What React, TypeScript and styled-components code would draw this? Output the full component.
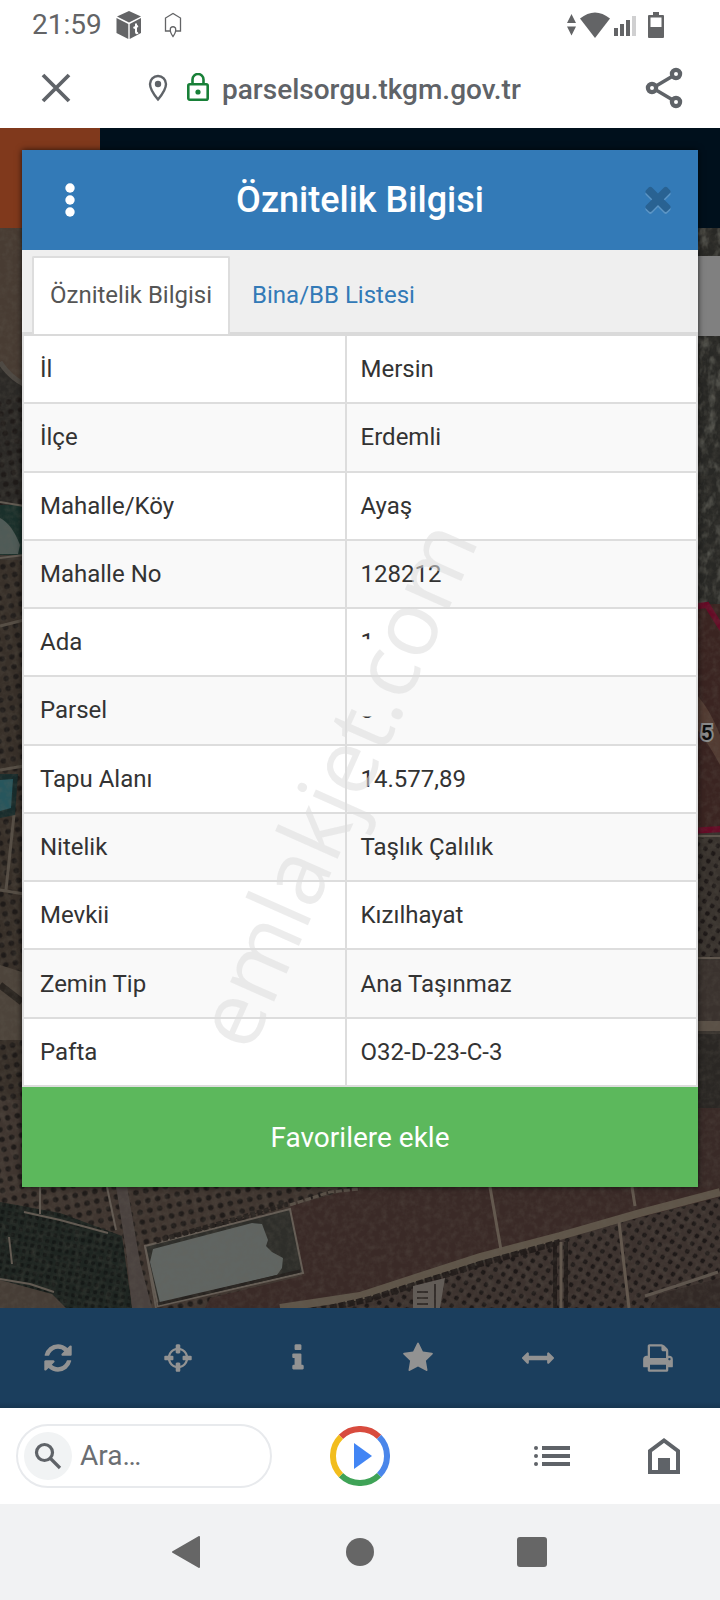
import React from "react";
import styled, { createGlobalStyle } from "styled-components";

const GlobalStyle = createGlobalStyle`
  * { box-sizing: border-box; }
  body { margin: 0; background: #ffffff; font-family: Roboto, "Liberation Sans", sans-serif; }
  button, input { font-family: inherit; }
`;

const Screen = styled.div`
  min-height: 100vh;
  display: flex;
  flex-direction: column;
`;

const StatusBar = styled.header`
  height: 50px;
  padding: 0 56px 0 32px;
  display: flex;
  align-items: center;
  justify-content: space-between;
  color: #636466;
`;

const StatusGroup = styled.div<{ $gap: number }>`
  display: flex;
  align-items: center;
  gap: ${(p) => p.$gap}px;
`;

const Clock = styled.span`
  font-size: 28px;
  line-height: 32px;
`;

const IconButton = styled.button`
  border: 0;
  padding: 0;
  background: transparent;
  color: inherit;
  display: flex;
  align-items: center;
  justify-content: center;
`;

const BrowserBar = styled.div`
  height: 78px;
  padding: 0 36px 2px 40px;
  display: flex;
  align-items: center;
  color: #5f6368;
`;

const Address = styled.div`
  flex: 1;
  min-width: 0;
  padding-left: 76px;
  display: flex;
  align-items: center;
`;

const LockBox = styled.span`
  display: flex;
  margin: 0 12px 0 18px;
`;

const Url = styled.span`
  font-size: 28px;
  font-weight: 500;
  line-height: 36px;
  padding-top: 4px;
`;

const Viewport = styled.main`
  flex: 1;
  display: grid;
  grid-template-columns: minmax(0, 1fr);
`;

const PageLayer = styled.div`
  grid-area: 1 / 1;
  display: flex;
  flex-direction: column;
`;

const SiteHeader = styled.div`
  height: 100px;
  display: flex;
  background: #00101c;
`;

const SiteLogo = styled.div`
  width: 100px;
  background: #80391c;
`;

const MapArea = styled.div`
  position: relative;
  flex: 1;
  overflow: hidden;
  background: #39342f;
`;

const MapDrawing = styled.svg`
  position: absolute;
  inset: 0;
  width: 100%;
  height: 100%;
`;

const MapPanel = styled.div`
  position: relative;
  width: 40px;
  height: 80px;
  margin: 28px 0 0 auto;
  background: #808080;
`;

const Toolbar = styled.nav`
  height: 100px;
  display: flex;
  color: #929292;
  background: linear-gradient(#1b3e5d 94%, #173650);
`;

const ToolButton = styled(IconButton)`
  flex: 1;
  padding-right: 4px;
`;

const Dialog = styled.section`
  grid-area: 1 / 1;
  position: relative;
  align-self: start;
  margin: 22px;
  box-shadow: 0 0 6px rgba(0, 0, 0, 0.7);
`;

const DialogHeader = styled.div`
  height: 100px;
  display: grid;
  grid-template-columns: 96px 1fr 96px;
  background: #337ab7;
  color: #ffffff;
`;

const DialogTitle = styled.h1`
  margin: 0;
  text-align: center;
  font-size: 36px;
  font-weight: 500;
  line-height: 100px;
  white-space: nowrap;
`;

const CloseButton = styled(IconButton)`
  padding: 0 0 4px 16px;
  color: #296292;
  svg { filter: drop-shadow(0 2px 0 #5c95c5); }
`;

const Tabs = styled.div`
  display: flex;
  gap: 4px;
  padding: 6px 10px 0;
  background: #efefef;
  border-bottom: 4px solid #dadada;
`;

const Tab = styled.button<{ $active?: boolean }>`
  height: 78px;
  margin-bottom: -2px;
  padding: 0 16px 2px;
  font-size: 24px;
  line-height: 32px;
  border: 2px solid ${(p) => (p.$active ? "#dddddd" : "transparent")};
  border-bottom: 0;
  border-radius: 2px 2px 0 0;
  background: ${(p) => (p.$active ? "#ffffff" : "transparent")};
  color: ${(p) => (p.$active ? "#555555" : "#337ab7")};
`;

const DataTable = styled.table`
  width: 100%;
  height: 751px;
  table-layout: fixed;
  border: 2px solid #dddddd;
  border-top: 0;
  border-bottom: 0;
  border-collapse: separate;
  border-spacing: 0;
  background: #ffffff;
  color: #333333;
  font-size: 24px;
  line-height: 32px;
`;

const Row = styled.tr`
  &:nth-child(even) { background: #f9f9f9; }
`;

const NameCell = styled.th`
  width: 48%;
  height: 68px;
  padding: 0 16px;
  border-right: 2px solid #dddddd;
  border-bottom: 2px solid #dddddd;
  text-align: left;
  font-weight: 400;
`;

const ValueCell = styled.td`
  padding: 0 14px;
  border-bottom: 2px solid #dddddd;
`;

const Masked = styled.span<{ $clip: string }>`
  display: inline-block;
  clip-path: inset(${(p) => p.$clip});
`;

const FavouriteButton = styled.button`
  display: block;
  width: 100%;
  height: 100px;
  border: 0;
  background: #5cb85c;
  color: #ffffff;
  font-size: 28px;
`;

const Watermark = styled.div`
  position: absolute;
  left: 46%;
  top: 61%;
  transform: translate(-50%, -50%) rotate(-66deg);
  font-family: "Open Sans", sans-serif;
  font-size: 90px;
  line-height: 92px;
  color: rgba(220, 220, 220, 0.55);
  pointer-events: none;
`;

const BottomBar = styled.footer`
  height: 96px;
  padding: 0 16px;
  display: grid;
  grid-template-columns: 1fr auto 1fr;
  align-items: center;
  color: #5f6368;
  background: #ffffff;
`;

const BottomActions = styled.div`
  display: flex;
  align-items: center;
  justify-content: flex-end;
  gap: 78px;
  padding-right: 24px;
`;

const SearchBox = styled.label`
  width: 256px;
  height: 64px;
  padding: 0 6px;
  display: flex;
  align-items: center;
  gap: 8px;
  border: 2px solid #e8eaed;
  border-radius: 32px;
`;

const SearchCircle = styled.span`
  flex: none;
  width: 48px;
  height: 48px;
  border-radius: 50%;
  display: flex;
  align-items: center;
  justify-content: center;
  background: #f1f3f4;
`;

const SearchInput = styled.input`
  min-width: 0;
  flex: 1;
  border: 0;
  padding: 0;
  outline: 0;
  background: transparent;
  font-size: 28px;
  line-height: 36px;
  &::placeholder { color: #6b6e72; opacity: 1; }
`;

const SystemNav = styled.nav`
  height: 96px;
  display: flex;
  align-items: center;
  justify-content: center;
  gap: 124px;
  color: #666666;
  background: #f1f2f3;
`;

const NavButton = styled(IconButton)`
  width: 48px;
  height: 48px;
`;

const toolIcons = [
  {
    label: "Yenile",
    path: "M1639 1056q0 5-1 7-64 268-268 434.5t-478 166.5q-146 0-282.5-55t-243.5-157l-129 129q-19 19-45 19t-45-19-19-45v-448q0-26 19-45t45-19h448q26 0 45 19t19 45-19 45l-137 137q71 66 161 102t187 36q134 0 250-65t186-179q11-17 53-117 8-23 30-23h192q13 0 22.5 9.5t9.5 22.5zm25-800v448q0 26-19 45t-45 19h-448q-26 0-45-19t-19-45 19-45l138-138q-148-137-349-137-134 0-250 65t-186 179q-11 17-53 117-8 23-30 23h-199q-13 0-22.5-9.5t-9.5-22.5v-7q65-268 270-434.5t480-166.5q146 0 284 55.5t245 156.5l130-129q19-19 45-19t45 19 19 45z",
  },
  {
    label: "Konum",
    path: "M1325 1024h-109q-26 0-45-19t-19-45v-128q0-26 19-45t45-19h109q-32-108-112.5-188.5t-188.5-112.5v109q0 26-19 45t-45 19h-128q-26 0-45-19t-19-45v-109q-108 32-188.5 112.5t-112.5 188.5h109q26 0 45 19t19 45v128q0 26-19 45t-45 19h-109q32 108 112.5 188.5t188.5 112.5v-109q0-26 19-45t45-19h128q26 0 45 19t19 45v109q108-32 188.5-112.5t112.5-188.5zm339-192v128q0 26-19 45t-45 19h-143q-37 161-154.5 278.5t-278.5 154.5v143q0 26-19 45t-45 19h-128q-26 0-45-19t-19-45v-143q-161-37-278.5-154.5t-154.5-278.5h-143q-26 0-45-19t-19-45v-128q0-26 19-45t45-19h143q37-161 154.5-278.5t278.5-154.5v-143q0-26 19-45t45-19h128q26 0 45 19t19 45v143q161 37 278.5 154.5t154.5 278.5h143q26 0 45 19t19 45z",
  },
  {
    label: "Bilgi",
    path: "M1216 1344v128q0 26-19 45t-45 19h-512q-26 0-45-19t-19-45v-128q0-26 19-45t45-19h64v-384h-64q-26 0-45-19t-19-45v-128q0-26 19-45t45-19h384q26 0 45 19t19 45v576h64q26 0 45 19t19 45zm-128-1152v192q0 26-19 45t-45 19h-256q-26 0-45-19t-19-45v-192q0-26 19-45t45-19h256q26 0 45 19t19 45z",
  },
  {
    label: "Favoriler",
    path: "M1728 647q0 22-26 48l-363 354 86 500q1 7 1 20 0 21-10.5 35.5t-30.5 14.5q-19 0-40-12l-449-236-449 236q-22 12-40 12-21 0-31.5-14.5t-10.5-35.5q0-6 2-20l86-500-364-354q-25-27-25-48 0-37 56-46l502-73 225-455q19-41 49-41t49 41l225 455 502 73q56 9 56 46z",
  },
  {
    label: "Ölçüm",
    path: "M1792 896q0 26-19 45l-256 256q-19 19-45 19t-45-19-19-45v-128h-1024v128q0 26-19 45t-45 19-45-19l-256-256q-19-19-19-45t19-45l256-256q19-19 45-19t45 19 19 45v128h1024v-128q0-26 19-45t45-19 45 19l256 256q19 19 19 45z",
  },
  {
    label: "Yazdır",
    path: "M448 1536h896v-256h-896v256zm0-640h896v-384h-160q-40 0-68-28t-28-68v-160h-640v640zm1152 64q0-26-19-45t-45-19-45 19-19 45 19 45 45 19 45-19 19-45zm128 0v416q0 13-9.5 22.5t-22.5 9.5h-224v160q0 40-28 68t-68 28h-960q-40 0-68-28t-28-68v-160h-224q-13 0-22.5-9.5t-9.5-22.5v-416q0-79 56.5-135.5t135.5-56.5h64v-544q0-40 28-68t68-28h672q40 0 88 20t76 48l152 152q28 28 48 76t20 88v256h64q79 0 135.5 56.5t56.5 135.5z",
  },
];

const closePath =
  "M1490 1322q0 40-28 68l-136 136q-28 28-68 28t-68-28l-294-294-294 294q-28 28-68 28t-68-28l-136-136q-28-28-28-68t28-68l294-294-294-294q-28-28-28-68t28-68l136-136q28-28 68-28t68 28l294 294 294-294q28-28 68-28t68 28l136 136q28 28 28 68t-28 68l-294 294 294 294q28 28 28 68z";

const rows: { name: string; value: string; clip?: string }[] = [
  { name: "İl", value: "Mersin" },
  { name: "İlçe", value: "Erdemli" },
  { name: "Mahalle/Köy", value: "Ayaş" },
  { name: "Mahalle No", value: "128212" },
  { name: "Ada", value: "1", clip: "0 0 19px 0" },
  { name: "Parsel", value: "3", clip: "22px 0 0 0" },
  { name: "Tapu Alanı", value: "14.577,89" },
  { name: "Nitelik", value: "Taşlık Çalılık" },
  { name: "Mevkii", value: "Kızılhayat" },
  { name: "Zemin Tip", value: "Ana Taşınmaz" },
  { name: "Pafta", value: "O32-D-23-C-3" },
];

function SatelliteMap() {
  return (
    <MapDrawing viewBox="0 228 720 1080" preserveAspectRatio="xMidYMid slice" aria-hidden="true">
      <defs>
        <pattern id="trees" width="10" height="10" patternUnits="userSpaceOnUse" patternTransform="rotate(-12)">
          <circle cx="5" cy="5" r="2.8" fill="#1f1b19" />
        </pattern>
        <pattern id="rowsOfTrees" width="9" height="9" patternUnits="userSpaceOnUse" patternTransform="rotate(32)">
          <circle cx="4" cy="4" r="2.4" fill="#1d1817" />
        </pattern>
        <pattern id="grove" width="7" height="7" patternUnits="userSpaceOnUse" patternTransform="rotate(10)">
          <circle cx="3" cy="3" r="2.2" fill="#141816" />
        </pattern>
        <filter id="grain" x="0" y="0" width="100%" height="100%" colorInterpolationFilters="sRGB">
          <feTurbulence type="fractalNoise" baseFrequency="0.16" numOctaves="3" seed="4" />
          <feColorMatrix values="0 0 0 0 0.40  0 0 0 0 0.38  0 0 0 0 0.34  1.6 0 0 0 -0.6" />
        </filter>
        <filter id="scrub" x="0" y="0" width="100%" height="100%" colorInterpolationFilters="sRGB">
          <feTurbulence type="fractalNoise" baseFrequency="0.12 0.08" numOctaves="3" seed="9" />
          <feColorMatrix values="0 0 0 0 0.42  0 0 0 0 0.42  0 0 0 0 0.39  3 0 0 0 -1.4" />
        </filter>
      </defs>

      {/* western edge */}
      <rect y="228" width="40" height="250" fill="#483c33" />
      <path d="M0 364Q14 382 40 388V520H0Z" fill="#2b2926" />
      <path d="M0 362Q14 384 40 390" fill="none" stroke="#4e4943" strokeWidth="5" />
      <rect y="395" width="40" height="110" fill="url(#trees)" />
      <path d="M0 505H22V555H0Z" fill="#1a302b" />
      <path d="M0 518Q12 524 20 545L18 554H0Z" fill="#4f5b57" />
      <path d="M0 502L24 506M0 558L24 555" stroke="#625b53" strokeWidth="2" />
      <rect y="560" width="40" height="660" fill="#383029" />
      <rect y="560" width="40" height="660" fill="url(#trees)" />
      <path d="M0 626L24 620M0 770L24 766M0 890L24 894M14 815L6 890" stroke="#564e45" strokeWidth="3" />
      <path d="M0 774H18L15 815 0 818Z" fill="#182c2c" />
      <path d="M0 780L13 779 11 808 0 811Z" fill="#27565d" />
      <path d="M0 965L22 972V1040H0Z" fill="#4d443b" />
      <path d="M0 985L22 1002" stroke="#2a2520" strokeWidth="7" />

      {/* eastern edge */}
      <rect x="690" y="228" width="30" height="380" fill="#282825" />
      <rect x="690" y="228" width="30" height="380" filter="url(#scrub)" opacity="0.6" />
      <rect x="690" y="604" width="30" height="228" fill="#3a2421" />
      <path d="M690 690Q706 700 720 735V765Q704 735 690 722Z" fill="#523b32" />
      <path d="M690 607L707 605 722 629M690 831L722 829" fill="none" stroke="#650b26" strokeWidth="6" />
      <rect x="690" y="838" width="30" height="120" fill="#39332e" />
      <rect x="690" y="838" width="30" height="120" fill="url(#rowsOfTrees)" />
      <path d="M690 836H720M690 958H720" stroke="#5f564d" strokeWidth="2" />
      <rect x="690" y="960" width="30" height="66" fill="#3a322e" />
      <path d="M690 1026H720" stroke="#5b5147" strokeWidth="10" />
      <rect x="690" y="1034" width="30" height="74" fill="#2a2724" />
      <rect x="690" y="1108" width="30" height="90" fill="#392a27" />

      {/* fields under the dialog */}
      <path d="M0 1100H380V1308H0Z" fill="#403630" />
      <path d="M0 1100H380V1308H0Z" fill="url(#trees)" />
      <path d="M0 1202L60 1213 122 1236 132 1308H62L50 1294 0 1280Z" fill="#1e2521" />
      <path d="M0 1202L60 1213 122 1236 132 1308H62L50 1294 0 1280Z" fill="url(#grove)" />
      <path d="M0 1280L52 1294 66 1308H0Z" fill="#463d36" />
      <path d="M24 1212L60 1220 108 1233M0 1279L30 1284 54 1292M40 1187V1214M9 1237L12 1264" fill="none" stroke="#625a52" strokeWidth="2" />
      <path d="M115 1180H126L140 1262 152 1308H132L126 1250Z" fill="#4a423f" />
      <path d="M107 1187L116 1230M145 1245L156 1308" stroke="#635b53" strokeWidth="2" />
      <path d="M290 1206L360 1187H720V1200L540 1240 360 1296 300 1308H205L210 1298 302 1276Z" fill="#3a2a27" />
      <path d="M145 1246L290 1209 303 1273 158 1306Z" fill="#2e2e2a" stroke="#665e56" strokeWidth="2" />
      <path d="M153 1249L252 1223 262 1224 268 1240 266 1246 272 1252 283 1258 282 1268 277 1275 160 1303 150 1262Z" fill="#606562" />
      <path d="M158 1304L300 1271" stroke="#26221f" strokeWidth="3" />
      <path d="M156 1241L240 1218 288 1204" stroke="#27221f" strokeWidth="5" strokeDasharray="5 2" />
      <path d="M290 1205L330 1192 360 1189" fill="none" stroke="#5a5148" strokeWidth="3" strokeDasharray="6 2" />

      {/* lower right orchards and the dirt track */}
      <path d="M340 1308L480 1264 560 1238 720 1197V1308Z" fill="#3d332f" />
      <path d="M340 1308L480 1264 560 1238 720 1197V1308Z" fill="url(#rowsOfTrees)" />
      <path d="M280 1308L360 1296 480 1257 560 1236 640 1213 720 1192" fill="none" stroke="#5f5549" strokeWidth="8" />
      <path d="M330 1308L370 1299 480 1264 560 1242" fill="none" stroke="#221c1a" strokeWidth="6" strokeDasharray="7 2" />
      <path d="M490 1187L501 1250M632 1187L635 1206M619 1222L629 1308M561 1242V1308" stroke="#63584e" strokeWidth="3" />
      <path d="M555 1244V1308M566 1242V1308" stroke="#211b19" strokeWidth="4" />
      <path d="M645 1296Q680 1285 718 1272" fill="none" stroke="#5e554d" strokeWidth="3" />
      <path d="M660 1294L720 1278V1308H650Z" fill="#322926" />
      <path d="M413 1286L445 1278 440 1308H413Z" fill="#625c57" />
      <path d="M417 1292H428M417 1298H428M417 1304H428M435 1284V1308" stroke="#342e2b" strokeWidth="2" />

      <rect y="228" width="720" height="1080" filter="url(#grain)" opacity="0.3" />

      <text
        x="701"
        y="740"
        fontFamily="Roboto, sans-serif"
        fontSize="20"
        fontWeight="700"
        fill="#0d0d0d"
        stroke="#8a8a8a"
        strokeWidth="4"
        paintOrder="stroke"
      >
        5
      </text>
    </MapDrawing>
  );
}

export default function App() {
  return (
    <>
      <GlobalStyle />
      <Screen>
        <StatusBar>
          <StatusGroup $gap={14}>
            <Clock>21:59</Clock>
            <svg width="26" height="28" viewBox="0 0 26 28" fill="currentColor">
              <path d="M13 0L25 5.5 13 11.5 1 5.5Z" />
              <path d="M0.5 7L12.3 13V28L0.5 22Z" />
              <path d="M13.7 13L25 7V22L13.7 28Z" />
              <path d="M20 12.5V21Q20 23 22 21.5M17.5 17L22 15" fill="none" stroke="#fff" strokeWidth="2" />
            </svg>
            <svg width="34" height="26" viewBox="1 0 34 26" fill="none" stroke="currentColor" strokeWidth="1.3">
              <path d="M15.5 19H10.5V6L18 1.5 25.5 6V19H20.5" />
              <path d="M18 24.5Q14.5 20 15.5 16Q18 13.5 20.5 16Q21.5 20 18 24.5Z" />
            </svg>
          </StatusGroup>
          <StatusGroup $gap={4}>
            <svg width="9" height="22" viewBox="0 0 9 22" fill="currentColor">
              <path d="M4.5 0L9 9H0ZM0 12.5H9L4.5 21.5Z" />
            </svg>
            <svg width="30" height="26" viewBox="0 0 30 26" fill="currentColor">
              <path d="M0 6.5Q15-5.5 30 6.5L15 26Z" />
            </svg>
            <svg width="30" height="22" viewBox="0 0 30 22" fill="currentColor">
              <path d="M0 14H4V22H0ZM6 10H10V22H6ZM12 6H16V22H12Z" />
              <path d="M18 2H22V22H18Z" opacity="0.3" />
            </svg>
            <svg width="16" height="26" viewBox="0 0 16 26" fill="currentColor">
              <path d="M5 0H11V3H15Q16 3 16 4V25Q16 26 15 26H1Q0 26 0 25V4Q0 3 1 3H5ZM2.5 5.5V15H13.5V5.5Z" fillRule="evenodd" />
            </svg>
          </StatusGroup>
        </StatusBar>

        <BrowserBar>
          <IconButton aria-label="Kapat">
            <svg width="32" height="32" viewBox="0 0 32 32" fill="none" stroke="currentColor" strokeWidth="3.8">
              <path d="M3 3L29 29M29 3L3 29" />
            </svg>
          </IconButton>
          <Address>
            <svg width="20" height="28" viewBox="0 0 20 28" fill="none" stroke="currentColor" strokeWidth="2.4">
              <path d="M10 25.5Q2 16 2 10A8 8 0 0 1 18 10Q18 16 10 25.5Z" />
              <circle cx="10" cy="10" r="3.2" fill="currentColor" stroke="none" />
            </svg>
            <LockBox>
              <svg width="24" height="30" viewBox="0 0 24 30" fill="none" stroke="#188038" strokeWidth="2.6">
                <rect x="2.3" y="11.3" width="19.4" height="15.4" rx="1.5" />
                <path d="M6.5 11V6.5A5.5 5.5 0 0 1 17.5 6.5V11" />
                <circle cx="12" cy="19" r="2.6" fill="#188038" stroke="none" />
              </svg>
            </LockBox>
            <Url>parselsorgu.tkgm.gov.tr</Url>
          </Address>
          <IconButton aria-label="Paylaş">
            <svg width="40" height="42" viewBox="0 0 40 42" fill="none" stroke="currentColor" strokeWidth="4.2">
              <circle cx="8" cy="21" r="4.1" />
              <circle cx="32" cy="7" r="4.1" />
              <circle cx="32" cy="35" r="4.1" />
              <path d="M12 19L28 9.5M12 23L28 32.5" strokeWidth="3.6" />
            </svg>
          </IconButton>
        </BrowserBar>

        <Viewport>
          <PageLayer>
            <SiteHeader>
              <SiteLogo />
            </SiteHeader>
            <MapArea>
              <SatelliteMap />
              <MapPanel />
            </MapArea>
            <Toolbar>
              {toolIcons.map((icon) => (
                <ToolButton key={icon.label} aria-label={icon.label}>
                  <svg width="32" height="32" viewBox="0 0 1792 1792" fill="currentColor">
                    <path d={icon.path} />
                  </svg>
                </ToolButton>
              ))}
            </Toolbar>
          </PageLayer>

          <Dialog role="dialog" aria-labelledby="dialog-title">
            <DialogHeader>
              <IconButton aria-label="Menü">
                <svg width="10" height="34" viewBox="0 0 10 34" fill="currentColor">
                  <circle cx="5" cy="5" r="4.7" />
                  <circle cx="5" cy="17" r="4.7" />
                  <circle cx="5" cy="29" r="4.7" />
                </svg>
              </IconButton>
              <DialogTitle id="dialog-title">Öznitelik Bilgisi</DialogTitle>
              <CloseButton aria-label="Pencereyi kapat">
                <svg width="38" height="38" viewBox="0 0 1792 1792" fill="currentColor">
                  <path d={closePath} />
                </svg>
              </CloseButton>
            </DialogHeader>
            <Tabs role="tablist">
              <Tab role="tab" aria-selected="true" $active>
                Öznitelik Bilgisi
              </Tab>
              <Tab role="tab" aria-selected="false">
                Bina/BB Listesi
              </Tab>
            </Tabs>
            <DataTable>
              <tbody>
                {rows.map((row) => (
                  <Row key={row.name}>
                    <NameCell scope="row">{row.name}</NameCell>
                    <ValueCell>{row.clip ? <Masked $clip={row.clip}>{row.value}</Masked> : row.value}</ValueCell>
                  </Row>
                ))}
              </tbody>
            </DataTable>
            <FavouriteButton>Favorilere ekle</FavouriteButton>
            <Watermark>emlakjet.com</Watermark>
          </Dialog>
        </Viewport>

        <BottomBar>
          <SearchBox>
            <SearchCircle>
              <svg width="28" height="28" viewBox="0 0 28 28" fill="none" stroke="currentColor" strokeWidth="3.2">
                <circle cx="10.5" cy="10.5" r="8" />
                <path d="M16 16L26 26" />
              </svg>
            </SearchCircle>
            <SearchInput type="text" placeholder="Ara…" aria-label="Ara" />
          </SearchBox>
          <IconButton aria-label="Oynat">
            <svg width="60" height="60" viewBox="0 0 60 60" fill="none" strokeWidth="6">
              <path d="M10.9 10.9A27 27 0 0 1 49.1 10.9" stroke="#d84b3e" />
              <path d="M49.1 10.9A27 27 0 0 1 49.1 49.1" stroke="#4a86ea" />
              <path d="M49.1 49.1A27 27 0 0 1 10.9 49.1" stroke="#3fa357" />
              <path d="M10.9 49.1A27 27 0 0 1 10.9 10.9" stroke="#f2bd1d" />
              <path d="M24 17L42 30 24 43Z" fill="#4285f4" />
            </svg>
          </IconButton>
          <BottomActions>
            <IconButton aria-label="Liste">
              <svg width="36" height="22" viewBox="0 0 36 22" fill="currentColor">
                <circle cx="2" cy="3" r="2" />
                <circle cx="2" cy="11" r="2" />
                <circle cx="2" cy="19" r="2" />
                <path d="M8 1H36V5H8ZM8 9H36V13H8ZM8 17H36V21H8Z" />
              </svg>
            </IconButton>
            <IconButton aria-label="Ana sayfa">
              <svg width="32" height="36" viewBox="0 0 32 36" fill="none">
                <path d="M2 34V13L16 2.5 30 13V34Z" stroke="currentColor" strokeWidth="4" />
                <path d="M10 20H22V34H10Z" fill="currentColor" />
              </svg>
            </IconButton>
          </BottomActions>
        </BottomBar>

        <SystemNav>
          <NavButton aria-label="Geri">
            <svg width="32" height="32" viewBox="0 0 32 32" fill="currentColor" stroke="currentColor" strokeWidth="2" strokeLinejoin="round">
              <path d="M1 16L27 1V31Z" />
            </svg>
          </NavButton>
          <NavButton aria-label="Ana ekran">
            <svg width="28" height="28" viewBox="0 0 28 28" fill="currentColor">
              <circle cx="14" cy="14" r="14" />
            </svg>
          </NavButton>
          <NavButton aria-label="Son uygulamalar">
            <svg width="30" height="30" viewBox="0 0 30 30" fill="currentColor">
              <rect width="30" height="30" rx="3" />
            </svg>
          </NavButton>
        </SystemNav>
      </Screen>
    </>
  );
}
